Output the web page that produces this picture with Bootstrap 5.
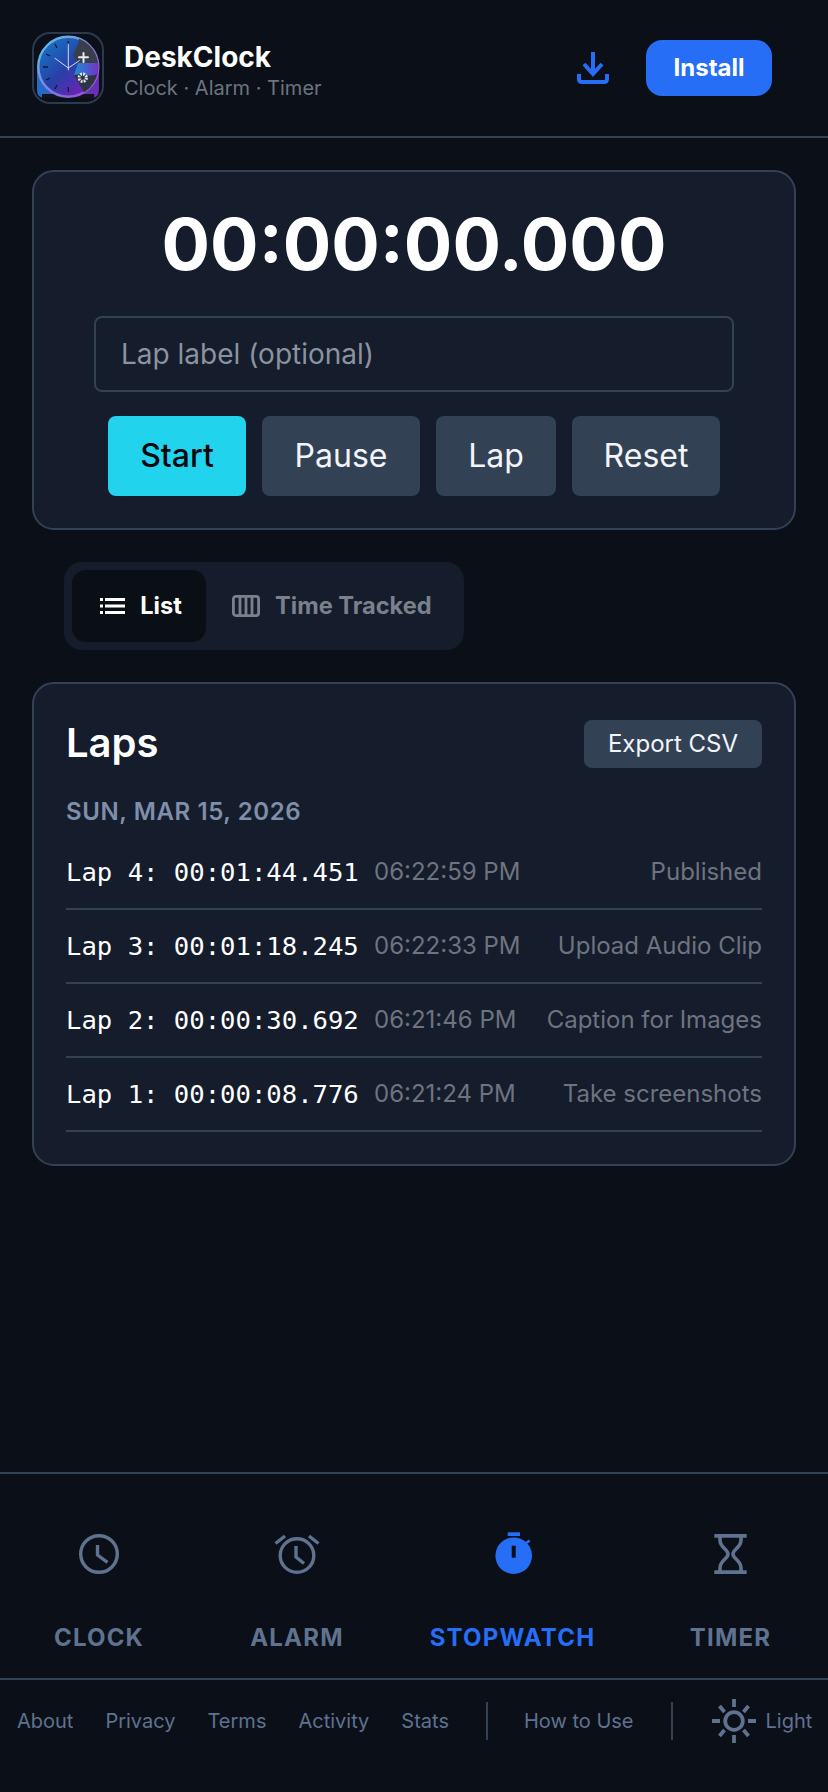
<!DOCTYPE html>
<html lang="en">
<head>
<meta charset="UTF-8">
<meta name="viewport" content="width=device-width, initial-scale=1.0">
<title>DeskClock</title>
<link href="https://cdn.jsdelivr.net/npm/bootstrap@5.3.0/dist/css/bootstrap.min.css" rel="stylesheet">
<style>
body { background: #0b0f17; font-family: Inter, "Liberation Sans", sans-serif; color: #fff; width: 828px; height: 1792px; }
.app-shell { height: 1792px; }
.app-head { height: 138px; padding: 32px 56px 0 32px; border-bottom: 2px solid #334155; }
.logo-box { width: 72px; height: 72px; border: 2px solid #2b3a4e; border-radius: 18px; }
.logo-box svg { display: block; width: 100%; height: 100%; }
.app-name { font-size: 28px; font-weight: 700; line-height: 32px; margin-top: 9px; }
.app-sub { font-size: 20px; color: #6d7480; line-height: 26px; margin-top: 2px; }
.dl-btn { width: 32px; height: 32px; margin-right: 37px; margin-top: 20px; }
.install-btn { width: 126px; height: 56px; background: #266ef6; color: #fff; font-size: 24px; font-weight: 700; border: 0; border-radius: 16px; padding: 0; margin-top: 8px; }
.panel { background: #151c2b; border: 2px solid #334155; border-radius: 22px; margin: 0 32px; }
.watch-panel { height: 360px; margin-top: 32px; padding-top: 32px; }
.watch-time { font-size: 72px; font-weight: 700; line-height: 80px; text-align: center; }
.lap-input { width: 640px; height: 76px; margin: 32px auto 0; background: #151c2b; border: 2px solid #334155; border-radius: 8px; color: #fff; font-size: 28px; padding: 0 25px; box-shadow: none; }
.lap-input::placeholder { color: #8a93a0; opacity: 1; }
.act-row { gap: 16px; margin-top: 24px; }
.act-btn { height: 80px; border: 0; border-radius: 8px; background: #334155; color: #f1f5f9; font-size: 32px; padding: 0; }
.act-start { width: 138px; background: #22d3ee; color: #05080d; font-weight: 500; }
.act-pause { width: 158px; }
.act-lap { width: 120px; }
.act-reset { width: 148px; }
.view-tabs { width: 400px; height: 88px; margin: 32px 0 0 64px; padding: 8px; background: #151c2b; border-radius: 18px; }
.view-tab { height: 72px; border: 0; background: none; border-radius: 14px; color: #7a818d; font-size: 23.6px; font-weight: 700; padding: 0; gap: 15px; }
.view-tab.is-on { width: 134px; background: #0a0e15; color: #fff; padding-left: 4px; }
.view-tab.is-off { margin-left: 26px; }
.laps-panel { height: 484px; margin-top: 32px; padding: 33px 32px 0; }
.laps-title { font-size: 40px; font-weight: 600; line-height: 52px; margin: 0; }
.csv-btn { width: 178px; height: 48px; border: 0; border-radius: 8px; background: #334155; color: #f1f5f9; font-size: 24px; padding: 0; margin-top: 1px; }
.lap-date { font-size: 24px; font-weight: 600; color: #7f8fa9; line-height: 32px; margin-top: 27px; letter-spacing: .6px; }
.lap-list { margin-top: 8px; }
.lap-row { height: 74px; border-bottom: 2px solid #334155; }
.lap-mono { font-family: "DejaVu Sans Mono", monospace; font-size: 25.6px; width: 308px; }
.lap-clock, .lap-note { font-size: 24px; color: #6d7480; }
.nav-strip { display: grid; grid-template-columns: 198px 198px 233px 1fr; height: 208px; margin-top: auto; border-top: 2px solid #334155; border-bottom: 2px solid #334155; }
.nav-cell { color: #5f7290; font-size: 24px; font-weight: 700; letter-spacing: 1.2px; padding-top: 56px; }
.nav-cell.is-on { color: #266ef6; }
.nav-cell.is-last { padding-left: 4px; }
.nav-cell svg { width: 48px; height: 48px; display: block; margin-bottom: 42px; }
.foot-strip { height: 112px; padding: 0 0 0 17px; color: #5f7290; font-size: 20px; }
.foot-strip a { color: inherit; text-decoration: none; }
.foot-links { gap: 32px; }
.foot-bar { width: 2px; height: 38px; background: #334155; margin: 0 36px 0 37px; }
.foot-bar.last { margin: 0 39px 0 37px; }
.foot-row { height: 82px; }
.foot-light { margin-left: 10px; }
</style>
</head>
<body>
<div class="app-shell d-flex flex-column">

  <header class="app-head d-flex align-items-start">
    <div class="logo-box flex-shrink-0">
      <svg viewBox="0 0 68 68">
        <defs>
          <linearGradient id="faceGrad" x1="0.1" y1="0.1" x2="0.85" y2="0.95"><stop offset="0" stop-color="#1673c4"/><stop offset=".5" stop-color="#2740a8"/><stop offset="1" stop-color="#7c1cb8"/></linearGradient>
          <linearGradient id="rimGrad" x1="0" y1="0" x2="1" y2="1"><stop offset="0" stop-color="#5cc4ea"/><stop offset="1" stop-color="#9a48d2"/></linearGradient>
          <linearGradient id="baseGrad" x1="0" y1="0" x2="1" y2="0"><stop offset="0" stop-color="#1f6fc8"/><stop offset="1" stop-color="#6d2bb0"/></linearGradient>
          <linearGradient id="patchGrad" x1="0" y1="0" x2="1" y2="0"><stop offset="0" stop-color="#1b8fd6"/><stop offset="1" stop-color="#7a2cc4"/></linearGradient>
          <clipPath id="faceClip"><circle cx="34.3" cy="32.7" r="30"/></clipPath>
        </defs>
        <path d="M3 32v24q0 8 8 8h46q8 0 8-8V32z" fill="url(#baseGrad)"/>
        <path d="M8 60h52v4H8z" fill="#15121f"/>
        <circle cx="34.3" cy="32.7" r="30" fill="url(#faceGrad)" stroke="url(#rimGrad)" stroke-width="2.4"/>
        <g clip-path="url(#faceClip)">
          <path d="M45 8L39 21l5 8h22V4H45z" fill="#3a3e4a"/>
          <path d="M44 29L40 41l11 19h15V29z" fill="#2e3442"/>
          <path d="M44 29h22v10c-6 3-12 3-18 1l-8 1z" fill="url(#patchGrad)"/>
        </g>
        <g stroke="#e4ebf4" stroke-width="2" stroke-linecap="round"><path d="M45 23.3h9M49.5 19v9"/></g>
        <circle cx="48.7" cy="43.7" r="3.7" fill="none" stroke="#dbe4f0" stroke-width="3" stroke-dasharray="1.8 1.1"/>
        <g stroke="#0c1830" stroke-width="1.3"><path d="M34.3 7v5M34.3 53v5M9 33h5M21 10l2 4M21 55l2-4M12 20l4 2M12 46l4-2"/></g>
        <g stroke="#cfd9e8" stroke-width="1" stroke-linecap="round"><path d="M34.3 36V10M34.3 34L21 24.3M34.3 34l11-7.3"/></g>
      </svg>
    </div>
    <div class="ms-3 ps-1 flex-grow-1">
      <div class="app-name">DeskClock</div>
      <div class="app-sub">Clock · Alarm · Timer</div>
    </div>
    <svg class="dl-btn" viewBox="0 0 32 32" fill="none" stroke="#266ef6" stroke-width="4"><path d="M16 0v21M7 12l9 10 9-10"/><path d="M2 22v5q0 3 3 3h22q3 0 3-3v-5"/></svg>
    <button class="install-btn">Install</button>
  </header>

  <section class="panel watch-panel">
    <div class="watch-time">00:00:00.000</div>
    <input class="form-control lap-input" type="text" placeholder="Lap label (optional)">
    <div class="act-row d-flex justify-content-center">
      <button class="act-btn act-start">Start</button>
      <button class="act-btn act-pause">Pause</button>
      <button class="act-btn act-lap">Lap</button>
      <button class="act-btn act-reset">Reset</button>
    </div>
  </section>

  <div class="view-tabs d-flex">
    <button class="view-tab is-on d-flex align-items-center justify-content-center">
      <svg width="25" height="16" viewBox="0 0 25 16" fill="#fff"><path d="M0 0h3v3H0zM0 6.5h3v3H0zM0 13h3v3H0zM5 0h20v3H5zM5 6.5h20v3H5zM5 13h20v3H5z"/></svg>
      List
    </button>
    <button class="view-tab is-off d-flex align-items-center">
      <svg width="28" height="22" viewBox="0 0 28 22" fill="none" stroke="#7a818d" stroke-width="2.8"><rect x="1.4" y="1.4" width="25.2" height="19.2" rx="2.5"/><path d="M8 1v20M14 1v20M20 1v20"/></svg>
      Time Tracked
    </button>
  </div>

  <section class="panel laps-panel">
    <div class="d-flex justify-content-between align-items-center">
      <h2 class="laps-title">Laps</h2>
      <button class="csv-btn">Export CSV</button>
    </div>
    <div class="lap-date">SUN, MAR 15, 2026</div>
    <div class="lap-list">
      <div class="lap-row d-flex align-items-center"><span class="lap-mono">Lap 4: 00:01:44.451</span><span class="lap-clock">06:22:59 PM</span><span class="lap-note ms-auto">Published</span></div>
      <div class="lap-row d-flex align-items-center"><span class="lap-mono">Lap 3: 00:01:18.245</span><span class="lap-clock">06:22:33 PM</span><span class="lap-note ms-auto">Upload Audio Clip</span></div>
      <div class="lap-row d-flex align-items-center"><span class="lap-mono">Lap 2: 00:00:30.692</span><span class="lap-clock">06:21:46 PM</span><span class="lap-note ms-auto">Caption for Images</span></div>
      <div class="lap-row d-flex align-items-center"><span class="lap-mono">Lap 1: 00:00:08.776</span><span class="lap-clock">06:21:24 PM</span><span class="lap-note ms-auto">Take screenshots</span></div>
    </div>
  </section>

  <nav class="nav-strip">
    <div class="nav-cell d-flex flex-column align-items-center">
      <svg viewBox="0 0 48 48" fill="none" stroke="#5f7290" stroke-width="3.4"><circle cx="24" cy="24" r="18.3"/><path d="M22.5 15v10l10 7.3"/></svg>
      CLOCK
    </div>
    <div class="nav-cell d-flex flex-column align-items-center">
      <svg viewBox="0 0 48 48" fill="none" stroke="#5f7290" stroke-width="3.4"><circle cx="24" cy="25.5" r="16.8"/><path d="M23 16v11l8 6.5M2.5 13.5L12 6M45.5 13.5L36 6"/></svg>
      ALARM
    </div>
    <div class="nav-cell is-on d-flex flex-column align-items-center">
      <svg viewBox="0 0 48 48"><circle cx="24.7" cy="25.7" r="18.3" fill="#266ef6"/><path d="M18.7 2.3H31V6H18.7z" fill="#266ef6"/><path d="M37 13l3.7-2.3" stroke="#266ef6" stroke-width="2.6"/><path d="M22.7 15.7h4v12h-4z" fill="#0b0f17"/></svg>
      STOPWATCH
    </div>
    <div class="nav-cell is-last d-flex flex-column align-items-center">
      <svg viewBox="0 0 48 48" fill="none" stroke="#5f7290" stroke-width="3.6"><path d="M7.3 5.9h32.4M7.3 42.1h32.4"/><path d="M13 6v4c0 8 8 9 8 14s-8 6-8 14v4M34 6v4c0 8-8 9-8 14s8 6 8 14v4"/></svg>
      TIMER
    </div>
  </nav>

  <footer class="foot-strip">
    <div class="foot-row d-flex align-items-center">
      <div class="d-flex foot-links"><a href="#">About</a><a href="#">Privacy</a><a href="#">Terms</a><a href="#">Activity</a><a href="#">Stats</a></div>
      <div class="foot-bar"></div>
      <a href="#">How to Use</a>
      <div class="foot-bar last"></div>
      <svg width="44" height="44" viewBox="0 0 44 44" fill="none" stroke="#5f7290" stroke-width="3.8"><circle cx="22" cy="22" r="8.8"/><path d="M22 0v8M22 36v8M0 22h8M36 22h8M7.5 7l5 6M36.5 7l-5 6M7.5 37l5-6M36.5 37l-5-6"/></svg>
      <a class="foot-light" href="#">Light</a>
    </div>
  </footer>
</div>
<script src="https://cdn.jsdelivr.net/npm/bootstrap@5.3.0/dist/js/bootstrap.bundle.min.js"></script>
</body>
</html>
